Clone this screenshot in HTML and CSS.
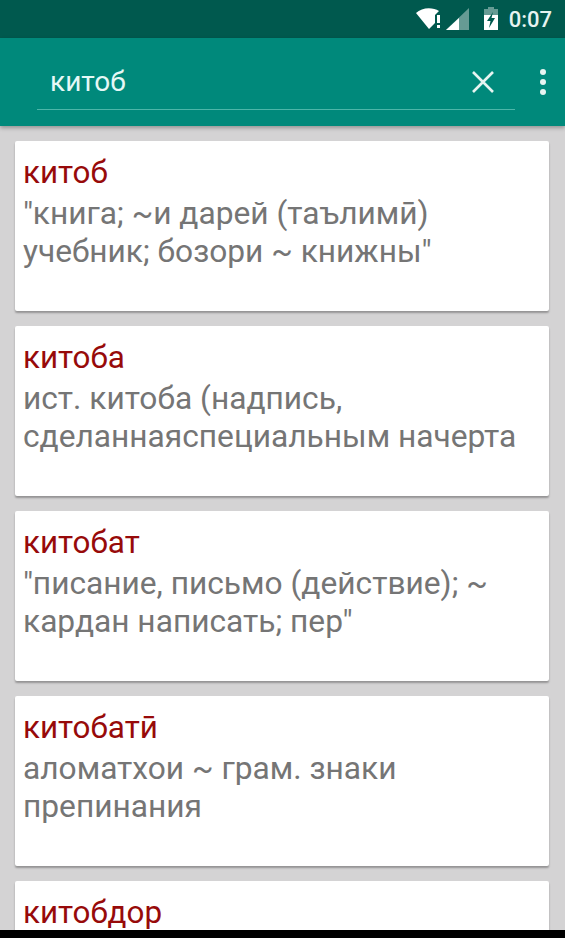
FILE: index.html
```html
<!DOCTYPE html>
<html lang="tg">
<head>
<meta charset="utf-8">
<title>китоб</title>
<link rel="stylesheet" href="styles.css">
</head>
<body>
<div class="screen">
  <header class="statusbar">
    <svg class="ic-wifi" viewBox="0 0 27 22" width="27" height="22"><path d="M0 5 C6 -1 17 -1 23 3 L19 7 L19 15 L13 21 Z" fill="#fff"/><path d="M21 7h3v8h-3zM21 17h3v3h-3z" fill="#fff"/></svg>
    <svg class="ic-signal" viewBox="0 0 24 24" width="24" height="24"><path d="M0 23 L23 1 V23 Z" fill="#fff" fill-opacity=".4"/><path d="M0 23 L13 11 V23 Z" fill="#fff"/></svg>
    <svg class="ic-batt" viewBox="0 0 16 24" width="16" height="24"><path d="M5 0h6v2h4v6H1V2h4z" fill="#fff" fill-opacity=".4"/><path d="M1 8h14v15H1z" fill="#fff"/><path d="M10 5 L4 14 H7.500 L6 21 L12 11 H8.500 Z" fill="#00594e"/></svg>
    <span class="clock">0:07</span>
  </header>
  <div class="toolbar">
    <div class="search">
      <span class="query">китоб</span>
      <svg class="ic-close" viewBox="0 0 24 24" width="24" height="24"><path d="M2 2 L22 22 M22 2 L2 22" stroke="#e6f4f1" stroke-width="2.600" fill="none"/></svg>
    </div>
    <div class="menu"><i></i><i></i><i></i></div>
  </div>
  <main class="list">
    <article class="card"><h2>китоб</h2><p>"книга; ~и дарей (таълимӣ) учебник; бозори ~ книжны"</p></article>
    <article class="card"><h2>китоба</h2><p>ист. китоба (надпись, сделаннаяспециальным начерта</p></article>
    <article class="card"><h2>китобат</h2><p>"писание, письмо (действие); ~ кардан написать; пер"</p></article>
    <article class="card"><h2>китобатӣ</h2><p>аломатхои ~ грам. знаки препинания</p></article>
    <article class="card"><h2>китобдор</h2></article>
  </main>
  <div class="navbar"></div>
</div>
</body>
</html>
```

FILE: styles.css
```css
* { box-sizing: border-box; }
html, body { margin: 0; padding: 0; }
body { font-family: Roboto, "Noto Sans", sans-serif; background: #d4d3d4; }
.screen { width: 565px; height: 938px; overflow: hidden; display: flex; flex-direction: column; position: relative; background: #d4d3d4; }
.statusbar { height: 38px; flex: none; background: #00594e; display: flex; align-items: center; justify-content: flex-end; padding-right: 13px; color: #e6f4f1; }
.ic-wifi { margin-right: 3px; }
.ic-signal { margin-right: 13px; }
.ic-batt { margin-right: 10px; }
.clock { font-size: 22px; font-weight: 500; color: #e6f4f1; }
.toolbar { height: 88px; flex: none; background: #00897b; display: flex; align-items: flex-start; padding: 0 19px 0 37px; box-shadow: 0 2px 4px rgba(0,0,0,.3); position: relative; z-index: 1; }
.search { flex: 1; height: 72px; margin-right: 25px; border-bottom: 1px solid #4db6a9; display: flex; align-items: center; justify-content: space-between; padding: 16px 20px 0 13px; }
.query { color: #e6f8f6; font-size: 28px; line-height: 56px; }
.ic-close { display: block; }
.menu { display: flex; flex-direction: column; gap: 4px; padding-top: 31px; }
.menu i { display: block; width: 6px; height: 6px; border-radius: 50%; background: #e6f4f1; }
.list { flex: 1; min-height: 0; padding: 15px 16px 0 15px; display: flex; flex-direction: column; gap: 15px; overflow: hidden; }
.card { flex: none; height: 170px; background: #fff; border-radius: 2px; box-shadow: 0 2px 2px rgba(0,0,0,.3); padding: 12px 8px 0; }
.card h2 { margin: 0; font-size: 31.4px; line-height: 39px; font-weight: 400; color: #970a0a; }
.card p { margin: 3px 0 0; font-size: 31.7px; line-height: 38px; color: #757575; }
.navbar { position: absolute; left: 0; right: 0; bottom: 0; height: 8px; background: #000; }
```
